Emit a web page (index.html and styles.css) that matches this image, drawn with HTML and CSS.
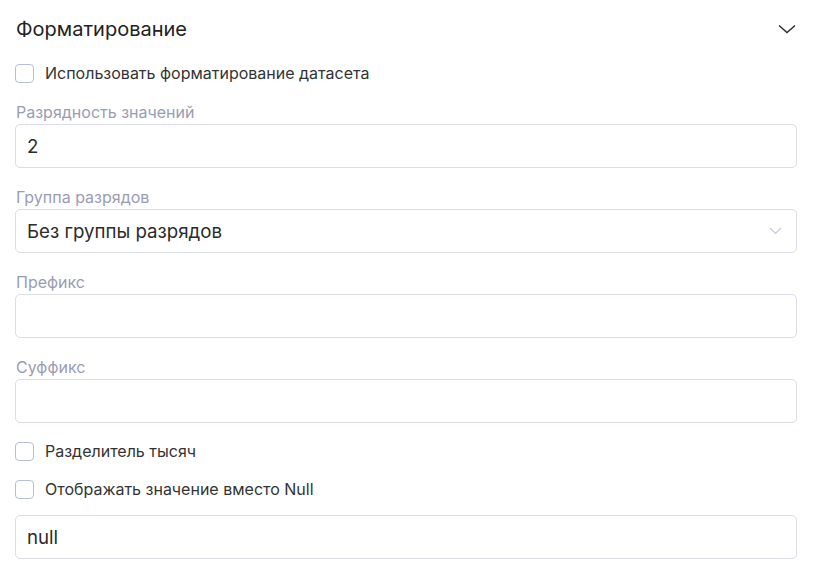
FILE: index.html
```html
<!DOCTYPE html>
<html lang="ru">
<head>
    <meta charset="UTF-8">
    <meta name="viewport" content="width=device-width, initial-scale=1.0">
    <title>Форматирование</title>
    <link rel="stylesheet" href="styles.css">
</head>
<body>
    <div class="panel">
        <div class="panel-header">
            <span class="panel-title">Форматирование</span>
            <svg class="chevron" width="18" height="10" viewBox="0 0 18 10">
                <path d="M1 1.5 L9 8.5 L17 1.5" fill="none" stroke="#2a2a2a" stroke-width="1.4"/>
            </svg>
        </div>

        <label class="check">
            <span class="box"></span>
            <span>Использовать форматирование датасета</span>
        </label>

        <div class="field">
            <div class="field-label">Разрядность значений</div>
            <div class="input">2</div>
        </div>

        <div class="field">
            <div class="field-label">Группа разрядов</div>
            <div class="input select">
                <span>Без группы разрядов</span>
                <svg width="13" height="8" viewBox="0 0 13 8">
                    <path d="M1 1 L6.5 6.5 L12 1" fill="none" stroke="#c9c9dd" stroke-width="1.2"/>
                </svg>
            </div>
        </div>

        <div class="field">
            <div class="field-label">Префикс</div>
            <div class="input"></div>
        </div>

        <div class="field">
            <div class="field-label">Суффикс</div>
            <div class="input"></div>
        </div>

        <label class="check check-tight">
            <span class="box"></span>
            <span>Разделитель тысяч</span>
        </label>

        <label class="check check-tight">
            <span class="box"></span>
            <span>Отображать значение вместо Null</span>
        </label>

        <div class="input null-input">null</div>
    </div>
</body>
</html>
```

FILE: styles.css
```css
body {
    margin: 0;
    background-color: #fff;
    font-family: Inter, "Noto Sans", sans-serif;
    color: #2b2b2b;
}

.panel {
    padding: 0 18px 0 15px;
}

.panel-header {
    display: flex;
    justify-content: space-between;
    align-items: center;
    height: 30px;
    padding-top: 14px;
}

.panel-title {
    font-size: 20px;
    padding-left: 1px;
    color: #222;
}

.chevron {
    margin-right: 1px;
}

.check {
    display: flex;
    align-items: center;
    gap: 11px;
    height: 20px;
    margin-top: 19px;
    font-size: 16px;
    color: #333;
}

.check-tight {
    margin-top: 0;
    margin-bottom: 18px;
}

.field + .check-tight {
    margin-top: -1px;
}

.box {
    width: 19px;
    height: 19px;
    box-sizing: border-box;
    border: 1px solid #b9bcd6;
    border-radius: 4px;
}

.field {
    margin-top: 19px;
}

.field + .field {
    margin-top: 0;
}

.field-label {
    font-size: 16px;
    line-height: 20px;
    color: #9a9cb4;
    padding-left: 1px;
    margin-bottom: 2px;
}

.input {
    height: 44px;
    box-sizing: border-box;
    border: 1px solid #dcdcea;
    border-radius: 5px;
    padding: 0 11px;
    display: flex;
    align-items: center;
    font-size: 18.7px;
    color: #2b2b2b;
    margin-bottom: 19px;
}

.select {
    justify-content: space-between;
    padding-right: 14px;
}

.null-input {
    margin-top: -2px;
}
```
